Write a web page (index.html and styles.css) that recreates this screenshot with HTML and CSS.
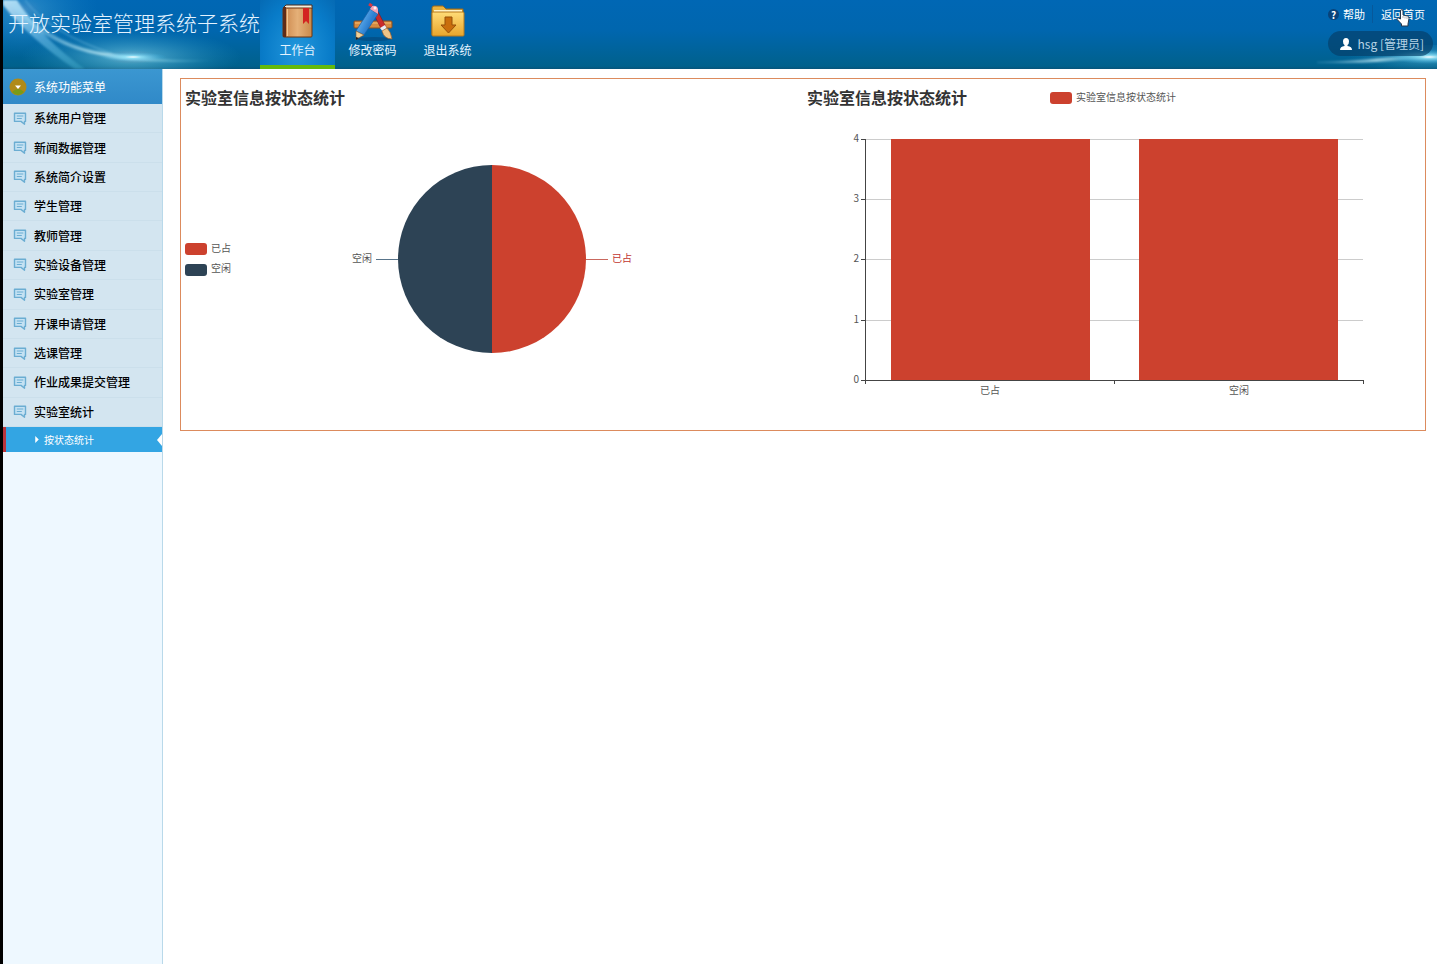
FILE: index.html
```html
<!DOCTYPE html>
<html lang="zh-CN">
<head>
<meta charset="utf-8">
<title>开放实验室管理系统子系统</title>
<link rel="stylesheet" href="styles.css">
</head>
<body>
<svg class="defs" width="0" height="0" aria-hidden="true">
  <defs>
    <symbol id="bubble" viewBox="0 0 14 13">
      <path d="M1.500 1.200h11v8.200h-1v2.800L8 9.400H1.500z" fill="#c5e2f3" stroke="#6badd2" stroke-width="1.4" stroke-linejoin="round"/>
      <path d="M3.800 4h6.500M3.800 6.500h5" stroke="#6badd2" stroke-width="1"/>
    </symbol>
  </defs>
</svg>
<header class="header">
  <svg class="glow glow-left" viewBox="0 0 260 69" aria-hidden="true">
    <defs>
      <radialGradient id="flare"><stop offset="0" stop-color="#fff"/><stop offset=".25" stop-color="#8ee4fa" stop-opacity=".8"/><stop offset="1" stop-color="#38aee0" stop-opacity="0"/></radialGradient>
      <linearGradient id="beam" x1="0" y1="0" x2="1" y2="1"><stop offset="0" stop-color="#d8f2ff" stop-opacity=".85"/><stop offset=".5" stop-color="#76c3ec" stop-opacity=".6"/><stop offset="1" stop-color="#55c5df" stop-opacity=".25"/></linearGradient>
      <linearGradient id="streak"><stop offset="0" stop-color="#a8e4fa" stop-opacity=".3"/><stop offset=".5" stop-color="#d9faff"/><stop offset="1" stop-color="#70d7ed" stop-opacity="0"/></linearGradient>
      <filter id="soft"><feGaussianBlur stdDeviation="1"/></filter>
    </defs>
    <ellipse cx="20" cy="10" rx="75" ry="48" fill="url(#flare)" opacity=".25"/>
    <ellipse cx="128" cy="57" rx="110" ry="28" fill="url(#flare)" opacity=".5"/>
    <g filter="url(#soft)">
      <path d="M0 0h14Q40 40 82 69H72Q28 40 0 5z" fill="url(#beam)"/>
      <path d="M12 0Q42 40 92 51 150 62 218 60 140 66 86 53 34 40 4 0z" fill="url(#streak)" opacity=".7"/>
      <path d="M22 0Q45 32 110 54" fill="none" stroke="#9bdcf7" stroke-width="1" opacity=".5"/>
    </g>
    <ellipse cx="130" cy="57" rx="34" ry="5" fill="url(#flare)"/>
  </svg>
  <svg class="glow glow-right" viewBox="0 0 140 24" aria-hidden="true">
    <ellipse cx="130" cy="12" rx="80" ry="16" fill="url(#flare)" opacity=".35"/>
    <path d="M20 17Q90 15 140 5V11Q90 19 20 18z" fill="url(#streak)" opacity=".7" filter="url(#soft)"/>
    <ellipse cx="132" cy="12" rx="40" ry="7" fill="url(#flare)"/>
  </svg>
  <h1 class="brand">开放实验室管理系统子系统</h1>
  <nav class="tabs" aria-label="主导航">
    <a class="tab tab-active" href="#">
      <svg class="tab-icon" viewBox="0 0 42 40" aria-hidden="true">
        <defs><linearGradient id="leather"><stop offset="0" stop-color="#c98449"/><stop offset=".5" stop-color="#e5b078"/><stop offset="1" stop-color="#c9894a"/></linearGradient></defs>
        <path d="M7 6l2-2h26v4H7z" fill="#f5eedc" stroke="#4a2d1e"/>
        <rect x="6" y="7" width="29" height="29" rx="1" fill="url(#leather)" stroke="#6b3513"/>
        <path d="M6 6h3v30H6z" fill="#5e2c18"/><path d="M10.500 8v27" stroke="#f0c693"/>
        <path d="M26 7h6v16l-3-3-3 3z" fill="#d32420"/>
      </svg>
      <span>工作台</span>
    </a>
    <a class="tab" href="#">
      <svg class="tab-icon" viewBox="0 0 42 40" aria-hidden="true">
        <defs><linearGradient id="pencil" x2="1" y2=".6"><stop offset=".2" stop-color="#6bb8f2"/><stop offset=".7" stop-color="#2c7fd0"/></linearGradient></defs>
        <ellipse cx="22" cy="38" rx="17" ry="2" fill="#053f70" opacity=".5"/>
        <rect x="2" y="20" width="38" height="7" rx="1" fill="#d68b40" stroke="#8a4e20"/>
        <path d="M3 22h36" stroke="#f4bd72"/>
        <path d="M20 10l4-3 10 19-4 3z" fill="#c92b2b" stroke="#841a22" stroke-width=".7"/>
        <path d="M28 27l5-3 2 4-4 3z" fill="#e8eef4"/>
        <path d="M30 30l5-3q4 4 5 11-8 0-10-8z" fill="#efc487" stroke="#935c2d" stroke-width=".7"/>
        <path d="M18 8l8 5-14 21-8-4z" fill="url(#pencil)" stroke="#195da5" stroke-width=".7"/>
        <path d="M4 30l8 4-8 4.500z" fill="#f3cf96" stroke="#7f5731" stroke-width=".6"/><path d="M4 36v3l3-2z" fill="#222"/>
        <path d="M18 8l2-3q5-1 6 3v5z" fill="#f3a3b5"/><path d="M17 3l3 2" stroke="#d83643" stroke-width="3"/>
        <circle cx="23" cy="7" r="1.500" fill="#fff0f3"/>
      </svg>
      <span>修改密码</span>
    </a>
    <a class="tab" href="#">
      <svg class="tab-icon" viewBox="0 0 42 40" aria-hidden="true">
        <defs><linearGradient id="folder" x2="0" y2="1"><stop offset="0" stop-color="#ffdc77"/><stop offset="1" stop-color="#e7a52c"/></linearGradient></defs>
        <path d="M5 34V7q0-2 2-2h9l3 3h17v26z" fill="#e9b33f" stroke="#9c681a"/>
        <path d="M7 9h28v3H7z" fill="#fff2c4"/>
        <rect x="5" y="11" width="32" height="24" rx="1" fill="url(#folder)" stroke="#b77b1c"/>
        <path d="M18 16h7v8h4l-7.500 8L14 24h4z" fill="#c96d0c" stroke="#955108"/>
      </svg>
      <span>退出系统</span>
    </a>
  </nav>
  <div class="account">
    <div class="links">
      <a class="help" href="#"><span class="question">?</span>帮助</a>
      <a class="home" href="#">返回首页<svg class="pointer" viewBox="0 0 14 18" aria-hidden="true"><path d="M4.500 10V2q0-1.300 1.200-1.300T7 2v4l4.500 1q1.800.4 1.500 2.500L12 15v2H5.500v-2L1.200 10.500q-.7-1.600.8-1.800z" fill="#fff" stroke="#26364b" stroke-width="1"/><path d="M7 7v2M9 7.500v2M11 8v2" stroke="#7b838d" stroke-width=".6"/></svg></a>
    </div>
    <div class="user">
      <svg class="user-icon" viewBox="0 0 12 12" aria-hidden="true"><path d="M6 0q3 0 3 3.500Q9 6 7.500 7v1Q12 8.500 12 12H0Q0 8.500 4.500 8V7Q3 6 3 3.500 3 0 6 0z" fill="#fff"/></svg>
      <span>hsg [管理员]</span>
    </div>
  </div>
</header>
<div class="layout">
  <aside class="sidebar">
    <button class="menu-head" type="button">
      <svg class="menu-toggle" viewBox="0 0 18 18" aria-hidden="true"><circle cx="9" cy="9" r="8.500" fill="#b08a18"/><path d="M3 14Q9 20 15 14 12 11 9 11T3 14z" fill="#789b19"/><path d="M6 7.500h6L9 11z" fill="#fff"/></svg>
      系统功能菜单
    </button>
    <nav aria-label="系统功能菜单">
      <ul class="menu">
        <li><a href="#"><svg class="bubble"><use href="#bubble"/></svg>系统用户管理</a></li>
        <li><a href="#"><svg class="bubble"><use href="#bubble"/></svg>新闻数据管理</a></li>
        <li><a href="#"><svg class="bubble"><use href="#bubble"/></svg>系统简介设置</a></li>
        <li><a href="#"><svg class="bubble"><use href="#bubble"/></svg>学生管理</a></li>
        <li><a href="#"><svg class="bubble"><use href="#bubble"/></svg>教师管理</a></li>
        <li><a href="#"><svg class="bubble"><use href="#bubble"/></svg>实验设备管理</a></li>
        <li><a href="#"><svg class="bubble"><use href="#bubble"/></svg>实验室管理</a></li>
        <li><a href="#"><svg class="bubble"><use href="#bubble"/></svg>开课申请管理</a></li>
        <li><a href="#"><svg class="bubble"><use href="#bubble"/></svg>选课管理</a></li>
        <li><a href="#"><svg class="bubble"><use href="#bubble"/></svg>作业成果提交管理</a></li>
        <li><a href="#"><svg class="bubble"><use href="#bubble"/></svg>实验室统计</a></li>
      </ul>
      <a class="submenu" href="#">
        <svg class="caret" viewBox="0 0 4 8" aria-hidden="true"><path d="M0 0l4 4-4 4z" fill="#fff"/></svg>
        <span>按状态统计</span>
        <svg class="notch" viewBox="0 0 5 12" aria-hidden="true"><path d="M5 0v12L0 6z" fill="#fff"/></svg>
      </a>
    </nav>
  </aside>
  <main class="content">
    <section class="panel">
      <svg class="chart" viewBox="0 0 622 351" role="img" aria-label="实验室信息按状态统计饼图">
        <text class="chart-title" x="4" y="25">实验室信息按状态统计</text>
        <rect class="red" x="4" y="164" width="22" height="12" rx="3"/>
        <text class="label" x="30" y="173">已占</text>
        <rect class="navy" x="4" y="185" width="22" height="12" rx="3"/>
        <text class="label" x="30" y="193">空闲</text>
        <path class="navy" d="M311 86a94 94 0 0 0 0 188z"/>
        <path class="red" d="M311 86a94 94 0 0 1 0 188z"/>
        <path class="navy-line" d="M195 180.500h22"/>
        <path class="red-line" d="M405 180.500h22"/>
        <text class="label" x="171" y="183">空闲</text>
        <text class="label label-red" x="431" y="183">已占</text>
      </svg>
      <svg class="chart" viewBox="0 0 622 351" role="img" aria-label="实验室信息按状态统计柱状图">
        <text class="chart-title" x="4" y="25">实验室信息按状态统计</text>
        <rect class="red" x="247" y="13" width="22" height="12" rx="3"/>
        <text class="label" x="273" y="22">实验室信息按状态统计</text>
        <path class="grid-line" d="M63 60.500h497M63 120.500h497M63 180.500h497M63 241.500h497"/>
        <rect class="red" x="88" y="60" width="199" height="241"/>
        <rect class="red" x="336" y="60" width="199" height="241"/>
        <path class="axis" d="M62.500 60v245M58 60.500h5M58 120.500h5M58 180.500h5M58 241.500h5M58 301.500h503M311.500 301v4M560.500 301v4"/>
        <g class="label tick">
          <text x="56" y="63">4</text>
          <text x="56" y="123">3</text>
          <text x="56" y="183">2</text>
          <text x="56" y="244">1</text>
          <text x="56" y="304">0</text>
        </g>
        <text class="label category" x="187" y="315">已占</text>
        <text class="label category" x="436" y="315">空闲</text>
      </svg>
    </section>
  </main>
</div>
</body>
</html>
```

FILE: styles.css
```css
* {
  box-sizing: border-box;
}

body {
  display: flex;
  flex-direction: column;
  min-height: 100vh;
  margin: 0;
  border-left: 3px solid #000;
  background: #fff;
  font: 12px/18px "Noto Sans CJK SC", "Noto Sans", sans-serif;
  color: #111;
}

a {
  color: inherit;
  text-decoration: none;
}

.defs {
  position: absolute;
}

.header {
  position: relative;
  display: flex;
  height: 69px;
  background: linear-gradient(#0067b4, #0066ae 45%, #00618c 96%, #07547a);
  color: #e4f3ff;
}

.glow {
  position: absolute;
}

.glow-left {
  top: 0;
  left: 0;
  width: 260px;
  height: 69px;
}

.glow-right {
  right: 0;
  bottom: 0;
  width: 140px;
  height: 24px;
}

.brand {
  position: relative;
  width: 257px;
  margin: 0;
  padding: 7px 0 0 5px;
  font-size: 21px;
  font-weight: 300;
  line-height: 30px;
  white-space: nowrap;
}

.tabs {
  position: relative;
  display: flex;
}

.tab {
  display: flex;
  flex-direction: column;
  align-items: center;
  width: 75px;
  padding-top: 1px;
}

.tab-active {
  border-bottom: 4px solid #64b90c;
  background: radial-gradient(ellipse at 50% 80%, #2397dc, #087bc8 65%, #056ab4);
}

.tab-icon {
  width: 42px;
  height: 40px;
}

.account {
  position: relative;
  display: flex;
  flex-direction: column;
  align-items: flex-end;
  gap: 8px;
  margin-left: auto;
  padding: 5px 4px 0 0;
}

.links {
  display: flex;
  padding-right: 8px;
  font-size: 11px;
  color: #fff;
}

.help {
  display: flex;
  align-items: center;
  gap: 4px;
  padding-right: 7px;
  border-right: 1px solid #07589a;
}

.question {
  width: 11px;
  height: 11px;
  border-radius: 50%;
  background: #08437a;
  font-size: 10px;
  font-weight: 700;
  line-height: 11px;
  text-align: center;
}

.home {
  position: relative;
  padding-left: 8px;
}

.pointer {
  position: absolute;
  top: 4px;
  right: 15px;
  width: 14px;
  height: 18px;
}

.user {
  display: flex;
  align-items: center;
  gap: 6px;
  height: 25px;
  padding: 0 9px 0 12px;
  border-radius: 13px;
  background: rgba(5, 61, 103, .65);
  color: #b8d5e7;
}

.user-icon {
  width: 12px;
  height: 12px;
}

.layout {
  display: flex;
  flex: 1;
}

.sidebar {
  flex: none;
  width: 160px;
  border-right: 1px solid #b9d9ea;
  background: #eef8ff;
}

.menu-head {
  display: flex;
  align-items: center;
  gap: 7px;
  width: 100%;
  height: 35px;
  padding: 0 6px;
  border: 0;
  background: linear-gradient(#3b97d1, #3089c8);
  color: #fff;
  font: inherit;
}

.menu-toggle {
  width: 18px;
  height: 18px;
}

.menu {
  display: grid;
  grid-auto-rows: 1fr;
  min-height: 323px;
  margin: 0;
  padding: 0;
  list-style: none;
  background: #d3e5f0;
}

.menu li {
  display: flex;
  border-bottom: 1px solid #cbdfeb;
}

.menu a {
  display: flex;
  flex: 1;
  align-items: center;
  gap: 7px;
  padding-left: 10px;
  font-weight: 500;
  color: #000;
}

.bubble {
  width: 14px;
  height: 13px;
}

.submenu {
  position: relative;
  display: flex;
  align-items: center;
  gap: 5px;
  height: 25px;
  padding-left: 29px;
  border-left: 3px solid #b9343c;
  background: #33a5e3;
  color: #fff;
  font-size: 10px;
}

.caret {
  width: 4px;
  height: 7px;
}

.notch {
  position: absolute;
  top: 7px;
  right: 0;
  width: 5px;
  height: 12px;
}

.content {
  flex: 1;
  min-width: 0;
  padding: 9px 11px 0 17px;
}

.panel {
  display: grid;
  grid-template-columns: 1fr 1fr;
  border: 1px solid #dc8b5d;
}

.chart {
  display: block;
  width: 100%;
  height: auto;
}

.chart-title {
  font-size: 16px;
  font-weight: 700;
  fill: #333;
}

.label {
  font-size: 10px;
  fill: #555;
}

.label-red {
  fill: #c23531;
}

.tick {
  text-anchor: end;
}

.category {
  text-anchor: middle;
}

.red {
  fill: #cc412e;
}

.navy {
  fill: #2d4355;
}

.red-line {
  stroke: #c9685e;
}

.navy-line {
  stroke: #58748a;
}

.grid-line {
  stroke: #ccc;
}

.axis {
  fill: none;
  stroke: #444;
}
```
